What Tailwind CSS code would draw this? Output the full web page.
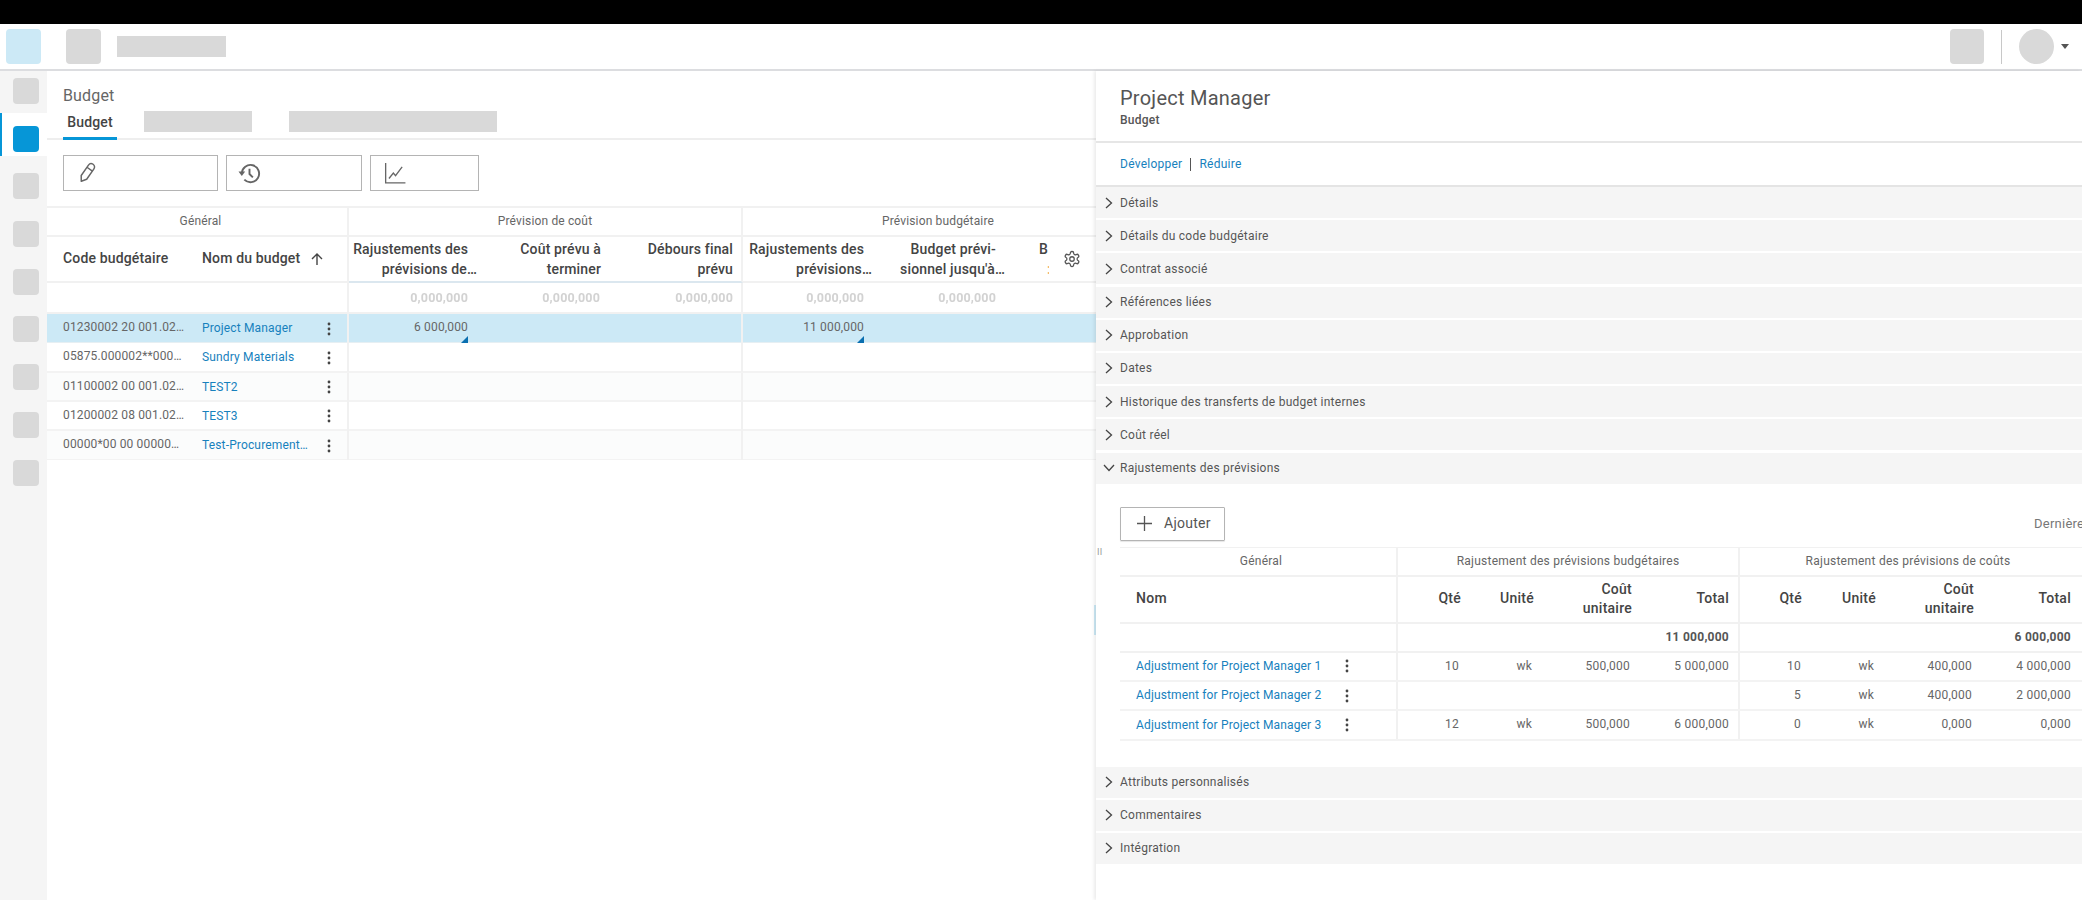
<!DOCTYPE html>
<html lang="fr">
<head>
  <meta charset="UTF-8" />
  <meta name="viewport" content="width=device-width, initial-scale=1.0" />
  <title>Budget</title>
  <script src="https://cdn.jsdelivr.net/npm/@tailwindcss/browser@4"></script>
</head>
<body class="bg-white font-['Roboto','Liberation_Sans',sans-serif] text-[12px] tracking-[0.15px] text-[#666] w-[2082px] h-[900px] overflow-hidden">

  <div class="h-[24px] bg-black"></div>

  <!-- Header -->
  <header class="h-[47px] border-b-2 border-[#dcdde0] flex items-center">
    <div class="w-[35px] h-[35px] ml-[6px] rounded-[4px] bg-[#cce9f6]"></div>
    <div class="w-[35px] h-[35px] ml-[25px] rounded-[4px] bg-[#d9d9d9]"></div>
    <div class="w-[109px] h-[21px] ml-[16px] bg-[#d9d9d9]"></div>
    <div class="w-[34px] h-[35px] ml-auto rounded-[4px] bg-[#d9d9d9]"></div>
    <div class="w-px h-[34px] ml-[17px] bg-[#c8c8c8]"></div>
    <div class="w-[35px] h-[35px] ml-[17px] rounded-full bg-[#d9d9d9]"></div>
    <svg class="ml-[7px] mr-[13px]" width="8" height="5" viewBox="0 0 8 5"><path d="M0 0h8L4 5z" fill="#555"/></svg>
  </header>

  <div class="flex h-[829px]">
    <!-- Sidebar -->
    <nav class="w-[47px] shrink-0 bg-[#f5f5f5] pt-[7px] flex flex-col gap-[21.7px]">
      <div class="w-[26px] h-[26px] ml-[13px] rounded-[4px] bg-[#d9d9d9]"></div>
      <div class="relative w-[26px] h-[26px] ml-[13px]">
        <div class="absolute -left-[13px] -top-[13px] w-[47px] h-[43px] bg-white border-l-2 border-[#0696d7]"></div>
        <div class="relative w-[26px] h-[26px] rounded-[4px] bg-[#0696d7]"></div>
      </div>
      <div class="w-[26px] h-[26px] ml-[13px] rounded-[4px] bg-[#d9d9d9]"></div>
      <div class="w-[26px] h-[26px] ml-[13px] rounded-[4px] bg-[#d9d9d9]"></div>
      <div class="w-[26px] h-[26px] ml-[13px] rounded-[4px] bg-[#d9d9d9]"></div>
      <div class="w-[26px] h-[26px] ml-[13px] rounded-[4px] bg-[#d9d9d9]"></div>
      <div class="w-[26px] h-[26px] ml-[13px] rounded-[4px] bg-[#d9d9d9]"></div>
      <div class="w-[26px] h-[26px] ml-[13px] rounded-[4px] bg-[#d9d9d9]"></div>
      <div class="w-[26px] h-[26px] ml-[13px] rounded-[4px] bg-[#d9d9d9]"></div>
    </nav>

    <!-- Budget list -->
    <main class="w-[1049px] shrink-0 relative overflow-hidden">
      <div class="h-[69px] border-b-2 border-[#eeeeee] pl-[16px]">
        <div class="pt-[14px] text-[16px] leading-[22px]">Budget</div>
        <div class="flex items-start mt-[4px]">
          <div class="w-[54px] h-[29px] text-center text-[14px] leading-[22px] font-medium text-[#444] border-b-[3px] border-[#0696d7]">Budget</div>
          <div class="w-[108px] h-[21px] ml-[27px] bg-[#d9d9d9]"></div>
          <div class="w-[208px] h-[21px] ml-[37px] bg-[#d9d9d9]"></div>
        </div>
      </div>

      <div class="flex gap-[8px] pl-[16px] pt-[15px] pb-[15px]">
        <button class="w-[155px] h-[36px] border border-[#b4b4b4] flex items-center pl-[12px]">
          <svg width="22" height="24" viewBox="0 0 16 18" fill="none" stroke="#666" stroke-width="1.1" stroke-linejoin="round"><g transform="rotate(35 8 9)"><path d="M5.5 3.5a2.5 2.5 0 0 1 5 0V13l-2.5 3.5L5.5 13z"/><path d="M5.5 5.5h5"/></g></svg>
        </button>
        <button class="w-[136px] h-[36px] border border-[#b4b4b4] flex items-center pl-[11px]">
          <svg width="23" height="23" viewBox="0 0 24 24" fill="none" stroke="#666" stroke-width="2"><path d="M4 12a9 9 0 1 1 2.6 6.4"/><path d="M0.5 10h7L4 14.5z" fill="#666" stroke="none"/><path d="M12 7v5.5l3.5 3.5"/></svg>
        </button>
        <button class="w-[109px] h-[36px] border border-[#b4b4b4] flex items-center pl-[13px]">
          <svg width="22" height="22" viewBox="0 0 20 20" fill="none" stroke="#666" stroke-width="1.2"><path d="M1.5 1v18h18"/><path d="M4.5 15l4-5 2 2.5 6-8"/></svg>
        </button>
      </div>

      <!-- Grouped headers -->
      <div class="grid grid-cols-[302px_394px_1fr] h-[31px] border-t-2 border-b-2 border-[#f1f1f1] leading-[27px] text-center">
        <div class="border-r-2 border-[#f1f1f1] pl-[7px]">Général</div>
        <div class="border-r-2 border-[#f1f1f1]">Prévision de coût</div>
        <div class="pl-[37px]">Prévision budgétaire</div>
      </div>

      <div class="grid grid-cols-[141px_122px_39px_123px_134px_137px_125px_132px_1fr] h-[46px] text-[14px] leading-[19.5px] font-medium text-[#444]">
        <div class="flex items-center pl-[16px] border-b-2 border-[#f1f1f1]">Code budgétaire</div>
        <div class="flex items-center pl-[14px] whitespace-nowrap border-b-2 border-[#f1f1f1]">Nom du budget</div>
        <div class="flex items-center border-r-2 border-b-2 border-[#f1f1f1]">
          <svg width="14" height="14" viewBox="0 0 14 14" fill="none" stroke="#444" stroke-width="1.4"><path d="M7 13V2M2 7l5-5 5 5"/></svg>
        </div>
        <div class="pt-[3px] pr-[4px] text-right whitespace-nowrap border-b-2 border-[#dbe7ef]">Rajustements des<br><span class="-mr-[9px] inline-block">prévisions de…</span></div>
        <div class="pt-[3px] pr-[5px] text-right border-b-2 border-[#dbe7ef]">Coût prévu à<br>terminer</div>
        <div class="pt-[3px] pr-[8px] text-right border-r-2 border-b-2 border-[#dbe7ef] border-r-[#f1f1f1]">Débours final<br>prévu</div>
        <div class="pt-[3px] pr-[4px] text-right whitespace-nowrap border-b-2 border-[#f1f1f1]">Rajustements des<br><span class="-mr-[8px] inline-block">prévisions…</span></div>
        <div class="pt-[3px] pr-[4px] text-right whitespace-nowrap border-b-2 border-[#f1f1f1]">Budget prévi-<br><span class="-mr-[9px] inline-block">sionnel jusqu'à…</span></div>
        <div class="pt-[3px] pl-[39px] border-b-2 border-[#f1f1f1]">B<br><span class="pl-[8px] text-[#f0b070]">:</span></div>
      </div>

      <!-- Totals placeholder -->
      <div class="grid grid-cols-[302px_123px_134px_137px_125px_132px_1fr] h-[31px] border-b-2 border-[#f1f1f1] leading-[30px] text-[12.5px] font-bold text-[#d2d2d2] text-right">
        <div class="border-r-2 border-[#f1f1f1]"></div>
        <div class="pr-[4px] blur-[0.6px]">0,000,000</div>
        <div class="pr-[6px] blur-[0.6px]">0,000,000</div>
        <div class="pr-[8px] border-r-2 border-[#f1f1f1] blur-[0.6px]">0,000,000</div>
        <div class="pr-[4px] blur-[0.6px]">0,000,000</div>
        <div class="pr-[4px] blur-[0.6px]">0,000,000</div>
        <div></div>
      </div>

      <!-- Rows -->
      <div class="grid grid-cols-[141px_122px_39px_123px_271px_125px_1fr] h-[29.3px] bg-[#cce9f6] leading-[27px] border-b border-[#e6eff3]">
        <div class="pl-[16px] whitespace-nowrap">01230002 20 001.02…</div>
        <div class="pl-[14px] text-[#1781bd] leading-[29px]">Project Manager</div>
        <div class="flex items-center border-r-2 border-[#f1f1f1]"><svg class="ml-[17px]" width="4" height="14" viewBox="0 0 4 14" fill="#444"><circle cx="2" cy="2" r="1.4"/><circle cx="2" cy="7" r="1.4"/><circle cx="2" cy="12" r="1.4"/></svg></div>
        <div class="relative pr-[4px] text-right">6 000,000<svg class="absolute right-[4px] bottom-0" width="7" height="7" viewBox="0 0 7 7"><path d="M7 0v7H0z" fill="#0a6fb0"/></svg></div>
        <div class="border-r-2 border-[#f1f1f1]"></div>
        <div class="relative pr-[4px] text-right">11 000,000<svg class="absolute right-[4px] bottom-0" width="7" height="7" viewBox="0 0 7 7"><path d="M7 0v7H0z" fill="#0a6fb0"/></svg></div>
        <div></div>
      </div>
      <div class="grid grid-cols-[141px_122px_39px_394px_1fr] h-[29.3px] leading-[27px] border-b-2 border-[#f3f3f3]">
        <div class="pl-[16px] whitespace-nowrap">05875.000002**000…</div>
        <div class="pl-[14px] text-[#1781bd] leading-[29px]">Sundry Materials</div>
        <div class="flex items-center border-r-2 border-[#f1f1f1]"><svg class="ml-[17px]" width="4" height="14" viewBox="0 0 4 14" fill="#444"><circle cx="2" cy="2" r="1.4"/><circle cx="2" cy="7" r="1.4"/><circle cx="2" cy="12" r="1.4"/></svg></div>
        <div class="border-r-2 border-[#f1f1f1]"></div>
        <div></div>
      </div>
      <div class="grid grid-cols-[141px_122px_39px_394px_1fr] h-[29.3px] bg-[#fbfcfc] leading-[27px] border-b-2 border-[#f3f3f3]">
        <div class="pl-[16px] whitespace-nowrap">01100002 00 001.02…</div>
        <div class="pl-[14px] text-[#1781bd] leading-[29px]">TEST2</div>
        <div class="flex items-center border-r-2 border-[#f1f1f1]"><svg class="ml-[17px]" width="4" height="14" viewBox="0 0 4 14" fill="#444"><circle cx="2" cy="2" r="1.4"/><circle cx="2" cy="7" r="1.4"/><circle cx="2" cy="12" r="1.4"/></svg></div>
        <div class="border-r-2 border-[#f1f1f1]"></div>
        <div></div>
      </div>
      <div class="grid grid-cols-[141px_122px_39px_394px_1fr] h-[29.3px] leading-[27px] border-b-2 border-[#f3f3f3]">
        <div class="pl-[16px] whitespace-nowrap">01200002 08 001.02…</div>
        <div class="pl-[14px] text-[#1781bd] leading-[29px]">TEST3</div>
        <div class="flex items-center border-r-2 border-[#f1f1f1]"><svg class="ml-[17px]" width="4" height="14" viewBox="0 0 4 14" fill="#444"><circle cx="2" cy="2" r="1.4"/><circle cx="2" cy="7" r="1.4"/><circle cx="2" cy="12" r="1.4"/></svg></div>
        <div class="border-r-2 border-[#f1f1f1]"></div>
        <div></div>
      </div>
      <div class="grid grid-cols-[141px_122px_39px_394px_1fr] h-[29.3px] bg-[#fbfcfc] leading-[27px] border-b border-[#f3f3f3]">
        <div class="pl-[16px] whitespace-nowrap">00000*00 00 00000…</div>
        <div class="pl-[14px] text-[#1781bd] leading-[29px] whitespace-nowrap">Test-Procurement…</div>
        <div class="flex items-center border-r-2 border-[#f1f1f1]"><svg class="ml-[17px]" width="4" height="14" viewBox="0 0 4 14" fill="#444"><circle cx="2" cy="2" r="1.4"/><circle cx="2" cy="7" r="1.4"/><circle cx="2" cy="12" r="1.4"/></svg></div>
        <div class="border-r-2 border-[#f1f1f1]"></div>
        <div></div>
      </div>

      <!-- Column settings, over the header's right end -->
      <div class="absolute left-[1002px] top-[166px] w-[47px] h-[44px] bg-white flex items-center pl-[14px]">
        <svg width="18" height="18" viewBox="0 0 24 24" fill="none" stroke="#555" stroke-width="1.7"><path d="M12.22 2h-.44a2 2 0 0 0-2 2v.18a2 2 0 0 1-1 1.73l-.43.25a2 2 0 0 1-2 0l-.15-.08a2 2 0 0 0-2.73.73l-.22.38a2 2 0 0 0 .73 2.73l.15.1a2 2 0 0 1 1 1.72v.51a2 2 0 0 1-1 1.74l-.15.09a2 2 0 0 0-.73 2.73l.22.38a2 2 0 0 0 2.73.73l.15-.08a2 2 0 0 1 2 0l.43.25a2 2 0 0 1 1 1.73V20a2 2 0 0 0 2 2h.44a2 2 0 0 0 2-2v-.18a2 2 0 0 1 1-1.73l.43-.25a2 2 0 0 1 2 0l.15.08a2 2 0 0 0 2.73-.73l.22-.39a2 2 0 0 0-.73-2.73l-.15-.08a2 2 0 0 1-1-1.74v-.5a2 2 0 0 1 1-1.74l.15-.09a2 2 0 0 0 .73-2.73l-.22-.38a2 2 0 0 0-2.73-.73l-.15.08a2 2 0 0 1-2 0l-.43-.25a2 2 0 0 1-1-1.73V4a2 2 0 0 0-2-2z"/><circle cx="12" cy="12" r="3"/></svg>
      </div>
      <div class="absolute right-0 top-[534px] w-[2px] h-[30px] bg-[#cce9f6]"></div>
    </main>

    <!-- Detail panel -->
    <aside class="w-[986px] shrink-0 relative overflow-hidden bg-white shadow-[-2px_0_3px_rgba(0,0,0,0.08)] tracking-[0.25px]">
      <span class="absolute left-[1px] top-[477px] text-[9px] leading-[9px] text-[#999]">II</span>
      <div class="h-[72px] pl-[24px] border-b-2 border-[#e6e6e6]">
        <div class="pt-[14px] text-[20px] leading-[26px] text-[#555]">Project Manager</div>
        <div class="text-[12px] leading-[18px] font-medium text-[#555]">Budget</div>
      </div>
      <div class="h-[44px] pl-[24px] border-b-2 border-[#e4e4e4] flex items-center text-[#1781bd]">
        <span>Développer</span><span class="w-px h-[13px] mx-[8px] bg-[#555]"></span><span>Réduire</span>
      </div>

      <div class="h-[31px] mb-[2.2px] bg-[#f5f5f5] flex items-center text-[#555]"><svg class="ml-[9px] mr-[7px]" width="8" height="12" viewBox="0 0 8 12" fill="none" stroke="#444" stroke-width="1.3"><path d="M1 1l5.5 5L1 11"/></svg>Détails</div>
      <div class="h-[31px] mb-[2.2px] bg-[#f5f5f5] flex items-center text-[#555]"><svg class="ml-[9px] mr-[7px]" width="8" height="12" viewBox="0 0 8 12" fill="none" stroke="#444" stroke-width="1.3"><path d="M1 1l5.5 5L1 11"/></svg>Détails du code budgétaire</div>
      <div class="h-[31px] mb-[2.2px] bg-[#f5f5f5] flex items-center text-[#555]"><svg class="ml-[9px] mr-[7px]" width="8" height="12" viewBox="0 0 8 12" fill="none" stroke="#444" stroke-width="1.3"><path d="M1 1l5.5 5L1 11"/></svg>Contrat associé</div>
      <div class="h-[31px] mb-[2.2px] bg-[#f5f5f5] flex items-center text-[#555]"><svg class="ml-[9px] mr-[7px]" width="8" height="12" viewBox="0 0 8 12" fill="none" stroke="#444" stroke-width="1.3"><path d="M1 1l5.5 5L1 11"/></svg>Références liées</div>
      <div class="h-[31px] mb-[2.2px] bg-[#f5f5f5] flex items-center text-[#555]"><svg class="ml-[9px] mr-[7px]" width="8" height="12" viewBox="0 0 8 12" fill="none" stroke="#444" stroke-width="1.3"><path d="M1 1l5.5 5L1 11"/></svg>Approbation</div>
      <div class="h-[31px] mb-[2.2px] bg-[#f5f5f5] flex items-center text-[#555]"><svg class="ml-[9px] mr-[7px]" width="8" height="12" viewBox="0 0 8 12" fill="none" stroke="#444" stroke-width="1.3"><path d="M1 1l5.5 5L1 11"/></svg>Dates</div>
      <div class="h-[31px] mb-[2.2px] bg-[#f5f5f5] flex items-center text-[#555]"><svg class="ml-[9px] mr-[7px]" width="8" height="12" viewBox="0 0 8 12" fill="none" stroke="#444" stroke-width="1.3"><path d="M1 1l5.5 5L1 11"/></svg>Historique des transferts de budget internes</div>
      <div class="h-[31px] mb-[2.2px] bg-[#f5f5f5] flex items-center text-[#555]"><svg class="ml-[9px] mr-[7px]" width="8" height="12" viewBox="0 0 8 12" fill="none" stroke="#444" stroke-width="1.3"><path d="M1 1l5.5 5L1 11"/></svg>Coût réel</div>
      <div class="h-[31px] bg-[#f5f5f5] flex items-center text-[#555]"><svg class="ml-[7px] mr-[5px]" width="12" height="8" viewBox="0 0 12 8" fill="none" stroke="#444" stroke-width="1.3"><path d="M1 1l5 5.5L11 1"/></svg>Rajustements des prévisions</div>

      <!-- Forecast adjustments -->
      <div class="h-[283px] pl-[24px] pt-[23px]">
        <div class="flex items-center h-[34px]">
          <button class="w-[105px] h-[34px] shrink-0 border border-[#b4b4b4] shadow-[0_1px_1px_rgba(0,0,0,0.1)] rounded-[1px] flex items-center pl-[16px] text-[14px] text-[#555]">
            <svg class="mr-[12px]" width="15" height="15" viewBox="0 0 15 15" fill="none" stroke="#555" stroke-width="1.3"><path d="M7.5 0v15M0 7.5h15"/></svg>Ajouter
          </button>
          <span class="ml-[809px] text-[13px] text-[#777] whitespace-nowrap">Dernière mise à jour</span>
        </div>

        <div class="grid grid-cols-[278px_342px_1fr] mt-[6px] h-[30px] border-t border-b-2 border-[#f1f1f1] text-center leading-[26px]">
          <div class="border-r-2 border-[#f1f1f1] pl-[6px]">Général</div>
          <div class="border-r-2 border-[#f1f1f1]">Rajustement des prévisions budgétaires</div>
          <div class="pr-[6px]">Rajustement des prévisions de coûts</div>
        </div>

        <div class="grid grid-cols-[278px_65px_73px_98px_106px_64px_74px_98px_106px] h-[47px] border-b-2 border-[#f1f1f1] text-[14px] leading-[19.5px] font-medium text-[#444] text-right">
          <div class="pl-[16px] flex items-center border-r-2 border-[#f1f1f1]">Nom</div>
          <div class="pr-[2px] flex items-center justify-end">Qté</div>
          <div class="pr-[2px] flex items-center justify-end">Unité</div>
          <div class="pr-[2px] flex items-center justify-end">Coût<br>unitaire</div>
          <div class="pr-[9px] flex items-center justify-end border-r-2 border-[#f1f1f1]">Total</div>
          <div class="pr-[2px] flex items-center justify-end">Qté</div>
          <div class="pr-[2px] flex items-center justify-end">Unité</div>
          <div class="pr-[2px] flex items-center justify-end">Coût<br>unitaire</div>
          <div class="pr-[11px] flex items-center justify-end">Total</div>
        </div>

        <div class="grid grid-cols-[278px_342px_1fr] h-[29.3px] border-b-2 border-[#f1f1f1] text-right font-bold text-[#555] leading-[27px]">
          <div class="border-r-2 border-[#f1f1f1]"></div>
          <div class="pr-[9px] border-r-2 border-[#f1f1f1]">11 000,000</div>
          <div class="pr-[11px]">6 000,000</div>
        </div>
        <div class="grid grid-cols-[278px_65px_73px_98px_106px_64px_74px_98px_106px] h-[29.3px] border-b-2 border-[#f3f3f3] text-right leading-[27px]">
          <div class="pl-[16px] pr-[47px] flex items-center justify-between text-left border-r-2 border-[#f1f1f1] text-[#1781bd] tracking-[0.15px]"><span>Adjustment for Project Manager 1</span><svg width="4" height="14" viewBox="0 0 4 14" fill="#444"><circle cx="2" cy="2" r="1.4"/><circle cx="2" cy="7" r="1.4"/><circle cx="2" cy="12" r="1.4"/></svg></div>
          <div class="pr-[4px]">10</div><div class="pr-[4px]">wk</div><div class="pr-[4px]">500,000</div>
          <div class="pr-[9px] border-r-2 border-[#f1f1f1]">5 000,000</div>
          <div class="pr-[3px]">10</div><div class="pr-[4px]">wk</div><div class="pr-[4px]">400,000</div>
          <div class="pr-[11px]">4 000,000</div>
        </div>
        <div class="grid grid-cols-[278px_65px_73px_98px_106px_64px_74px_98px_106px] h-[29.3px] border-b-2 border-[#f3f3f3] text-right leading-[27px]">
          <div class="pl-[16px] pr-[47px] flex items-center justify-between text-left border-r-2 border-[#f1f1f1] text-[#1781bd] tracking-[0.15px]"><span>Adjustment for Project Manager 2</span><svg width="4" height="14" viewBox="0 0 4 14" fill="#444"><circle cx="2" cy="2" r="1.4"/><circle cx="2" cy="7" r="1.4"/><circle cx="2" cy="12" r="1.4"/></svg></div>
          <div></div><div></div><div></div>
          <div class="border-r-2 border-[#f1f1f1]"></div>
          <div class="pr-[3px]">5</div><div class="pr-[4px]">wk</div><div class="pr-[4px]">400,000</div>
          <div class="pr-[11px]">2 000,000</div>
        </div>
        <div class="grid grid-cols-[278px_65px_73px_98px_106px_64px_74px_98px_106px] h-[29.3px] border-b-2 border-[#f3f3f3] text-right leading-[27px]">
          <div class="pl-[16px] pr-[47px] flex items-center justify-between text-left border-r-2 border-[#f1f1f1] text-[#1781bd] tracking-[0.15px]"><span>Adjustment for Project Manager 3</span><svg width="4" height="14" viewBox="0 0 4 14" fill="#444"><circle cx="2" cy="2" r="1.4"/><circle cx="2" cy="7" r="1.4"/><circle cx="2" cy="12" r="1.4"/></svg></div>
          <div class="pr-[4px]">12</div><div class="pr-[4px]">wk</div><div class="pr-[4px]">500,000</div>
          <div class="pr-[9px] border-r-2 border-[#f1f1f1]">6 000,000</div>
          <div class="pr-[3px]">0</div><div class="pr-[4px]">wk</div><div class="pr-[4px]">0,000</div>
          <div class="pr-[11px]">0,000</div>
        </div>
      </div>

      <div class="h-[31px] mb-[2.2px] bg-[#f5f5f5] flex items-center text-[#555]"><svg class="ml-[9px] mr-[7px]" width="8" height="12" viewBox="0 0 8 12" fill="none" stroke="#444" stroke-width="1.3"><path d="M1 1l5.5 5L1 11"/></svg>Attributs personnalisés</div>
      <div class="h-[31px] mb-[2.2px] bg-[#f5f5f5] flex items-center text-[#555]"><svg class="ml-[9px] mr-[7px]" width="8" height="12" viewBox="0 0 8 12" fill="none" stroke="#444" stroke-width="1.3"><path d="M1 1l5.5 5L1 11"/></svg>Commentaires</div>
      <div class="h-[31px] bg-[#f5f5f5] flex items-center text-[#555]"><svg class="ml-[9px] mr-[7px]" width="8" height="12" viewBox="0 0 8 12" fill="none" stroke="#444" stroke-width="1.3"><path d="M1 1l5.5 5L1 11"/></svg>Intégration</div>
    </aside>
  </div>
</body>
</html>
